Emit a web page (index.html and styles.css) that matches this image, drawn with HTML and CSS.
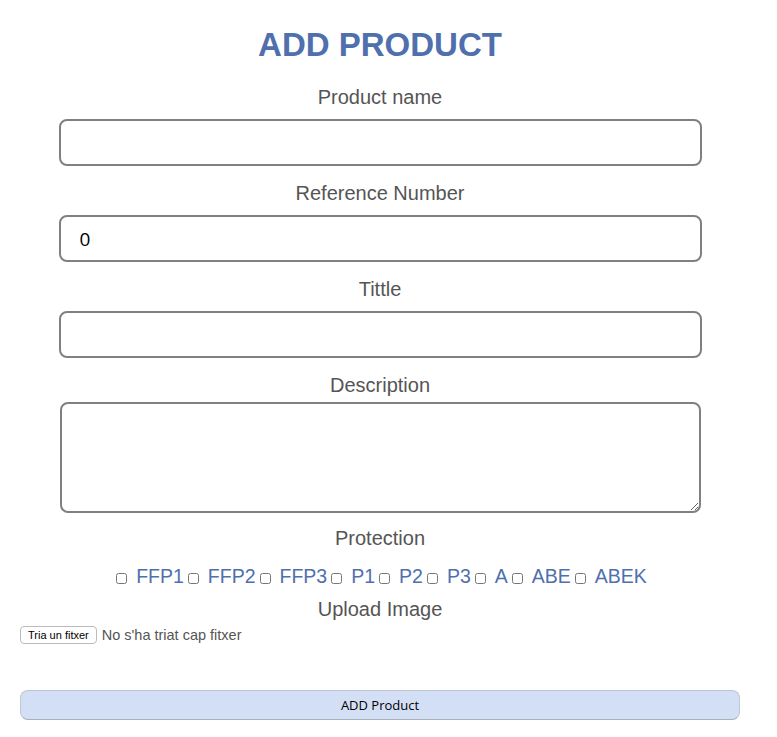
FILE: index.html
```html
<!DOCTYPE html>
<html>
<head>
<meta charset="utf-8">
<link rel="stylesheet" href="styles.css">
</head>
<body>
<div class="page">
  <h1 class="title">ADD PRODUCT</h1>
  <form class="form">
    <label class="lbl">Product name</label>
    <input class="field" type="text">
    <label class="lbl">Reference Number</label>
    <input class="field" type="text" value="0">
    <label class="lbl">Tittle</label>
    <input class="field" type="text">
    <label class="lbl">Description</label>
    <textarea class="area"></textarea>
    <label class="lbl prot">Protection</label>
    <div class="checks">
      <input type="checkbox" class="cb"><span class="opt">FFP1</span>
      <input type="checkbox" class="cb"><span class="opt">FFP2</span>
      <input type="checkbox" class="cb"><span class="opt">FFP3</span>
      <input type="checkbox" class="cb"><span class="opt">P1</span>
      <input type="checkbox" class="cb"><span class="opt">P2</span>
      <input type="checkbox" class="cb"><span class="opt">P3</span>
      <input type="checkbox" class="cb"><span class="opt">A</span>
      <input type="checkbox" class="cb"><span class="opt">ABE</span>
      <input type="checkbox" class="cb"><span class="opt">ABEK</span>
    </div>
    <label class="lbl">Upload Image</label>
    <div class="file">
      <button type="button" class="filebtn">Tria un fitxer</button>
      <span class="filetxt">No s'ha triat cap fitxer</span>
    </div>
    <button type="button" class="submit">ADD Product</button>
  </form>
</div>
</body>
</html>
```
FILE: styles.css
```css
html, body {
  margin: 0;
  padding: 0;
  background: #fff;
}
.page {
  width: 720px;
  margin-left: 20px;
  font-family: "Liberation Sans", Arial, sans-serif;
}
.title {
  margin: 0;
  padding-top: 27px;
  text-align: center;
  color: #4f6fad;
  font-size: 33px;
  line-height: 36px;
  font-weight: bold;
}
.form {
  display: flex;
  flex-direction: column;
  align-items: center;
  padding-top: 22px;
}
.lbl {
  display: block;
  font-size: 20px;
  line-height: 24px;
  color: #555;
  text-align: center;
  margin-top: 15px;
}
.form > .lbl:first-child {
  margin-top: 0;
}
.field {
  box-sizing: border-box;
  width: 643px;
  height: 47px;
  margin-top: 10px;
  border: 2px solid #808080;
  border-radius: 8px;
  padding: 0 19px;
  font-family: "Open Sans", sans-serif;
  font-size: 19px;
  color: #000;
  background: #fff;
  outline: none;
}
.area {
  box-sizing: border-box;
  width: 641px;
  height: 111px;
  margin-top: 5px;
  border: 2px solid #808080;
  border-radius: 8px;
  background: #fff;
  outline: none;
}
.prot {
  margin-top: 13px;
}
.checks {
  display: flex;
  align-items: center;
  margin-top: 14px;
  height: 24px;
  margin-left: -1px;
}
.cb {
  width: 11px;
  height: 11px;
  margin: 4px 9px 0 4px;
}
.opt {
  font-size: 19.5px;
  line-height: 24px;
  color: #4f6fad;
}
.checks + .lbl {
  margin-top: 9px;
}
.file {
  align-self: flex-start;
  display: flex;
  align-items: center;
  margin-top: 5px;
}
.filebtn {
  font-family: "Liberation Sans", Arial, sans-serif;
  font-size: 11px;
  height: 18px;
  padding: 0 7px;
  background: #fff;
  border: 1px solid #bbb;
  border-radius: 4px;
  color: #000;
  line-height: 16px;
}
.filetxt {
  margin-left: 5px;
  font-size: 14.5px;
  color: #555;
}
.submit {
  box-sizing: border-box;
  width: 720px;
  height: 30px;
  margin-top: 46px;
  background: #d3dff5;
  border: 1px solid #c0c6d2;
  border-bottom-color: #a9b0bd;
  border-radius: 8px;
  font-family: "Open Sans", sans-serif;
  font-size: 13px;
  color: #000;
}
```
